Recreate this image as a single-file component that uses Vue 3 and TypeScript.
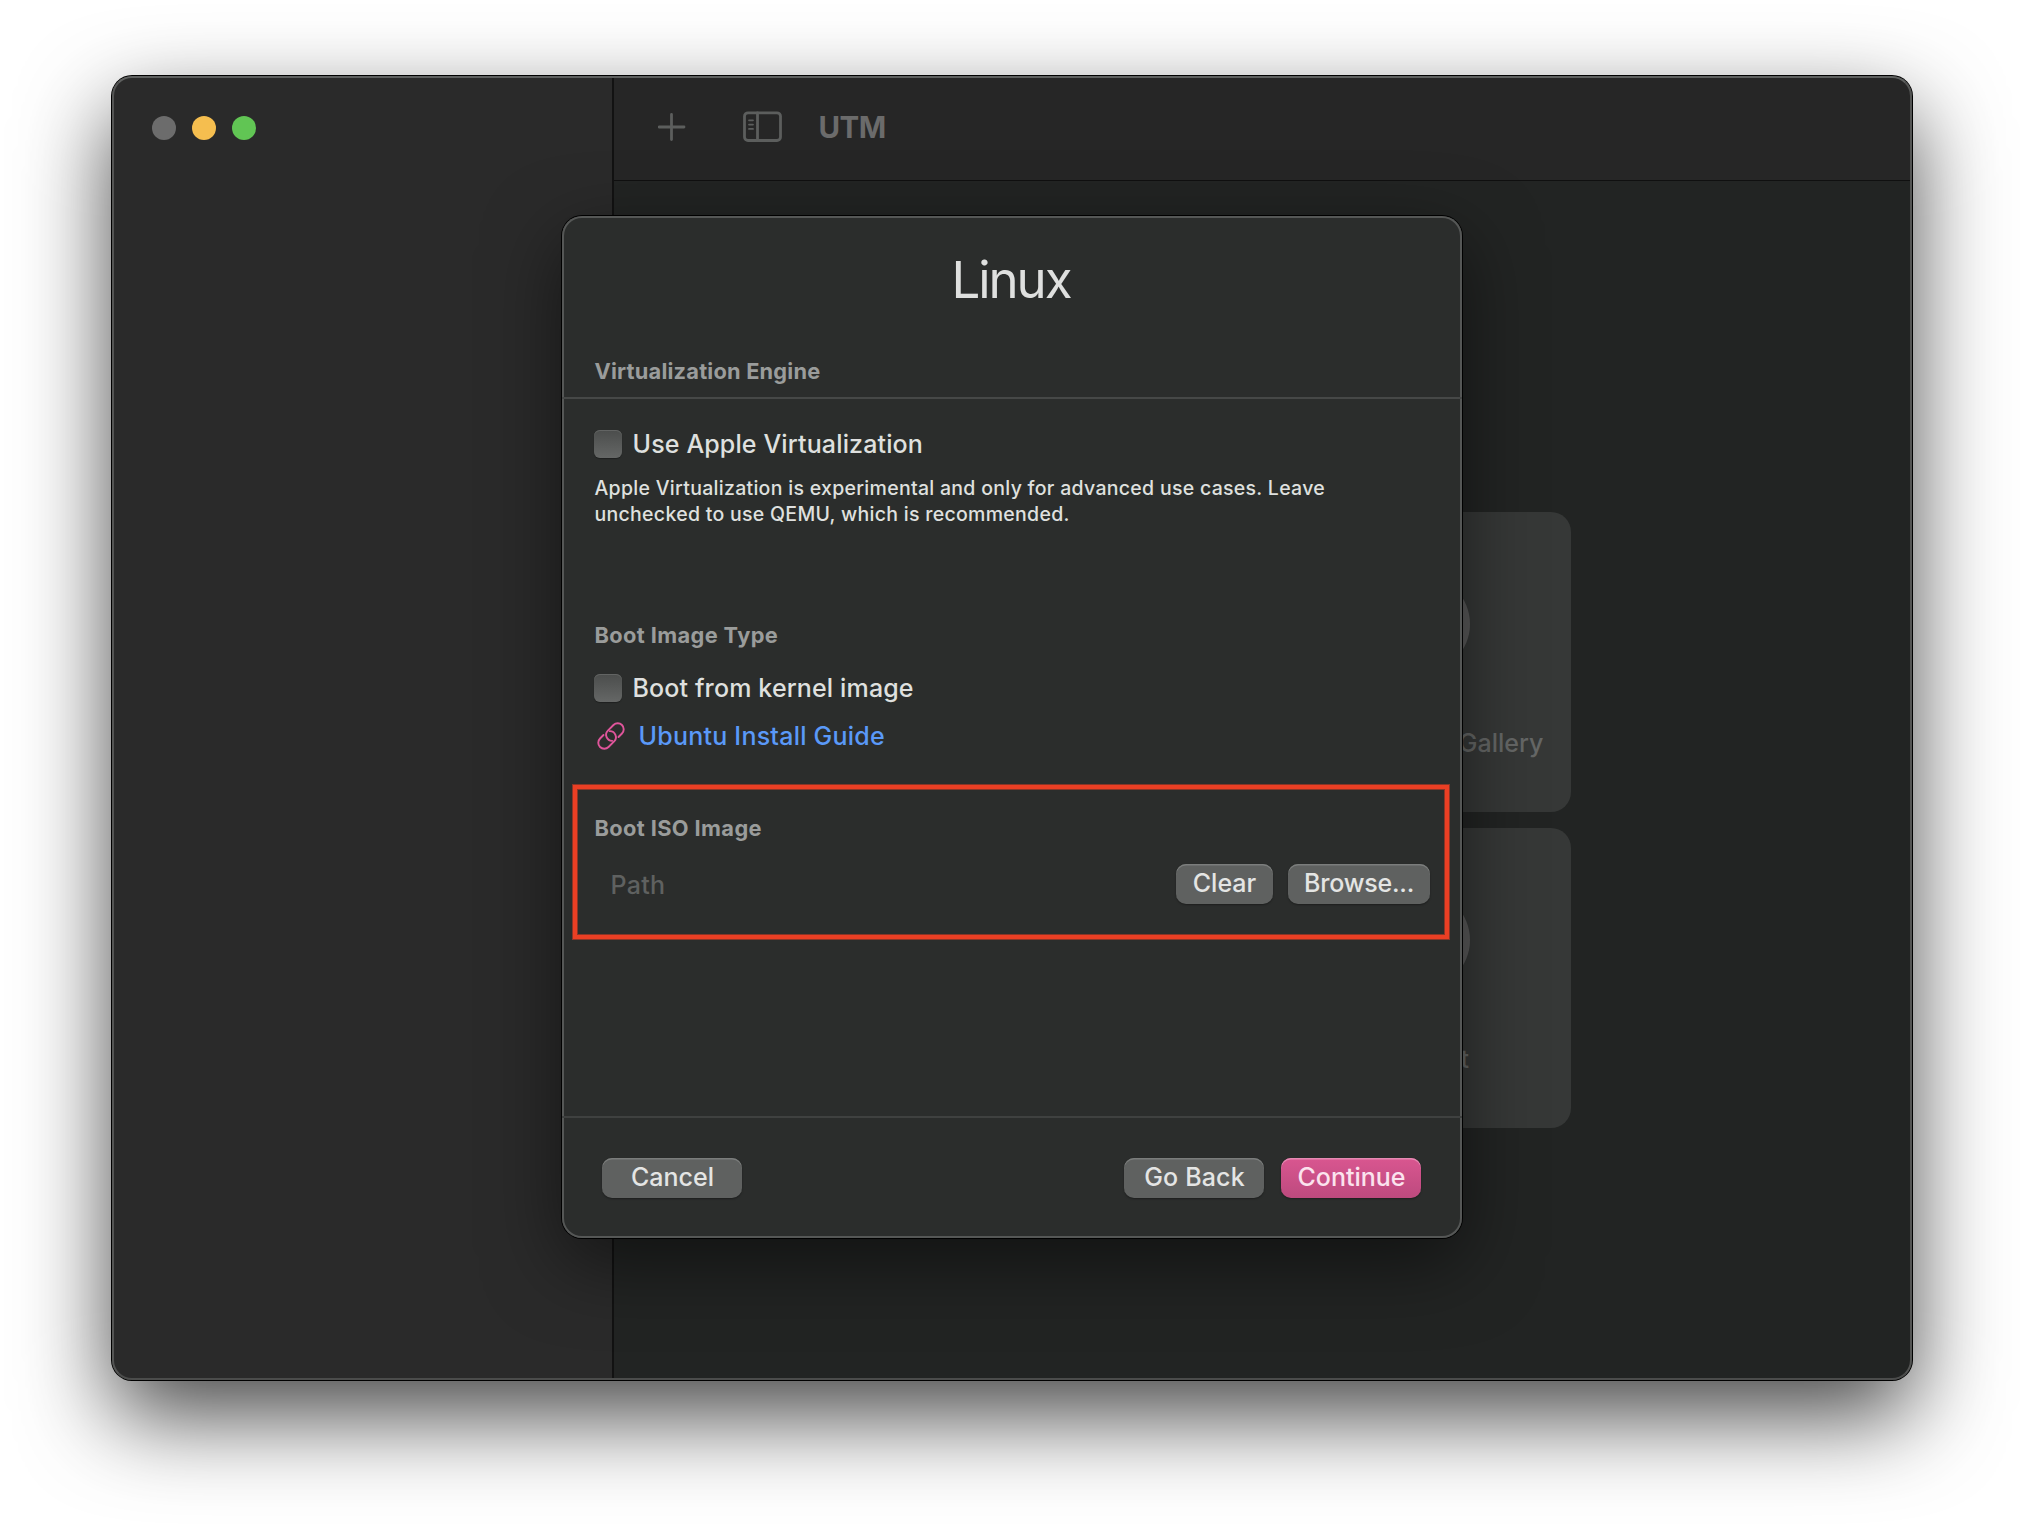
<script setup lang="ts">
const cards: string[] = ['', 'Browse UTM Gallery', '', 'Support']
</script>

<template>
  <div class="desktop">
    <div class="window">
      <aside class="sidebar">
        <div class="lights"><i class="light close"></i><i class="light min"></i><i class="light max"></i></div>
      </aside>
      <main class="main">
        <header class="toolbar">
          <svg class="plus" width="28" height="28" viewBox="0 0 28 28"><path d="M13.5 1.5v25M1 14h25" /></svg>
          <svg class="panel" width="40" height="32" viewBox="0 0 40 32">
            <rect x="1.5" y="1.8" width="36" height="27.7" rx="3.5" />
            <path d="M14.5 1.8v27.7" />
            <path class="thin" d="M6 9.3h4M6 13.6h4M6 17.9h4" />
          </svg>
          <span class="app-name">UTM</span>
        </header>
        <section class="gallery">
          <div v-for="(label, i) in cards" :key="i" class="card">
            <i class="disc"></i>
            <span class="card-label">{{ label }}</span>
          </div>
        </section>
      </main>
      <div class="edge"></div>

      <div class="sheet">
        <h1 class="title">Linux</h1>
        <h2 class="heading first">Virtualization Engine</h2>
        <hr class="rule" />
        <label class="check one"><i class="box"></i>Use Apple Virtualization</label>
        <p class="note">Apple Virtualization is experimental and only for advanced use cases. Leave<br />unchecked to use QEMU, which is recommended.</p>
        <h2 class="heading second">Boot Image Type</h2>
        <label class="check two"><i class="box"></i>Boot from kernel image</label>
        <a class="link">
          <svg width="28" height="28" viewBox="-14 -14 28 28">
            <g transform="rotate(-45)">
              <path d="M4.6 6H9.5A6 6 0 0 0 9.5 -6H1.6A6 6 0 0 0 -2.6 4.3" />
              <path d="M-4.6 -6H-9.5A6 6 0 0 0 -9.5 6H-1.6A6 6 0 0 0 2.6 -4.3" />
            </g>
          </svg>
          <span>Ubuntu Install Guide</span>
        </a>
        <h2 class="heading third">Boot ISO Image</h2>
        <div class="path-row">
          <span class="placeholder">Path</span>
          <button class="btn clear">Clear</button>
          <button class="btn browse">Browse...</button>
        </div>
        <footer class="footer">
          <button class="btn wide">Cancel</button>
          <button class="btn wide back">Go Back</button>
          <button class="btn wide primary">Continue</button>
        </footer>
        <div class="marker"></div>
      </div>
    </div>
  </div>
</template>

<style>
body { margin: 0; background: #fff; }
</style>

<style scoped>
* { box-sizing: border-box; }
.desktop { width: 2024px; height: 1528px; padding: 76px 112px; overflow: hidden; background: #fff; font-family: Inter, "Liberation Sans", sans-serif; }
.window { position: relative; display: flex; width: 1800px; height: 1304px; border-radius: 20px; background: #222423; box-shadow: 0 0 0 1px #000, 0 36px 90px rgba(0, 0, 0, .72); }
.edge { position: absolute; inset: 0; border-radius: 20px; border: 2px solid #545554; border-top-color: #5e605f; border-bottom-color: #4b4c4b; pointer-events: none; }
.sidebar { width: 502px; border-right: 2px solid #121212; background: #2a2a2a; border-radius: 20px 0 0 20px; padding: 40px; }
.lights { display: flex; gap: 16px; }
.light { width: 24px; height: 24px; border-radius: 50%; }
.close { background: #6c6c6c; }
.min { background: #f5be4f; }
.max { background: #61c554; }
.main { flex: 1; display: flex; flex-direction: column; }
.toolbar { display: flex; align-items: center; height: 105px; padding: 0 0 3px 44px; background: #262626; border-bottom: 1px solid #101010; border-radius: 0 20px 0 0; }
svg { fill: none; stroke: #5c5e5d; stroke-width: 2.8; stroke-linecap: round; flex: none; }
.app-name { font-size: 29.5px; font-weight: 650; letter-spacing: -.5px; color: #6b6b6b; margin-left: 35.5px; }
.panel { margin-left: 57px; }
.thin { stroke-width: 1.8; }
.gallery { display: grid; grid-template-columns: 300px 300px; grid-auto-rows: 300px; gap: 16px; margin: 331px 0 0 341px; }
.card { display: flex; flex-direction: column; align-items: center; border-radius: 20px; background: #363837; padding-top: 63px; }
.disc { width: 98px; height: 98px; border-radius: 50%; background: #5a5a5a; }
.card-label { font-size: 25px; line-height: 30px; margin-top: 55px; color: #656766; font-weight: 450; white-space: nowrap; }
.sheet { position: absolute; left: 450px; top: 140px; width: 900px; height: 1022px; display: flex; flex-direction: column; border-radius: 20px; background: #2b2d2c; color: #dfe0df; font-size: 25px; font-weight: 450; letter-spacing: .14px; box-shadow: inset 0 0 0 2px #555756, 0 0 0 1px #000, 0 24px 76px rgba(0, 0, 0, .5); }
h1, h2, p { margin: 0; }
.title { margin-top: 34px; padding-right: 2px; text-align: center; font-size: 51px; line-height: 60px; font-weight: 430; letter-spacing: -2.1px; }
.heading { margin-left: 32.5px; font-size: 21.8px; line-height: 26px; font-weight: 700; letter-spacing: .38px; color: #9a9c9b; }
.first { margin-top: 48px; letter-spacing: .2px; }
.rule { width: 900px; height: 2px; margin: 13px 0 0; border: 0; background: #464847; }
.check { display: flex; align-items: center; height: 28px; margin-left: 32px; gap: 10.5px; }
.one { margin-top: 31px; }
.box { width: 28px; height: 28px; border-radius: 6px; background: linear-gradient(#4b4d4c, #656766); box-shadow: inset 0 1px 0 #626463, 0 1px 1px rgba(0, 0, 0, .3); }
.note { margin: 17px 0 0 32.5px; font-size: 19.5px; line-height: 26px; white-space: nowrap; font-weight: 500; letter-spacing: .29px; }
.second { margin-top: 95px; }
.two { margin-top: 26px; }
.link { display: flex; align-items: center; gap: 13.5px; height: 28px; margin: 20px 0 0 35px; color: #5a99f8; letter-spacing: .23px; }
.link svg { stroke: #e0559b; stroke-width: 1.9; overflow: visible; }
.third { margin-top: 65px; }
.path-row { display: flex; align-items: center; height: 40px; margin: 23px 32px 0 48px; }
.placeholder { color: #5f6160; margin: 2px auto 0 .5px; letter-spacing: .3px; }
.btn { display: flex; align-items: center; justify-content: center; height: 40px; padding: 0 0 3px; border: 0; border-radius: 10px; background: #5f6160; color: #e4e5e4; font: 450 25px Inter, "Liberation Sans", sans-serif; box-shadow: inset 0 1.5px 0 #7b7d7c, 0 1px 2px rgba(0, 0, 0, .35); }
.clear { width: 97px; margin-right: 15px; }
.browse { width: 142px; letter-spacing: -.2px; }
.footer { display: flex; height: 122px; margin-top: auto; padding: 40px 41px 0 40px; border-top: 2px solid #3f4140; }
.wide { width: 140px; padding-left: 1px; }
.back { margin: 0 17px 0 auto; letter-spacing: .15px; }
.primary { background: linear-gradient(#d95690, #bd4a7e); color: #fbe3ee; box-shadow: inset 0 1.5px 0 #e58ab3, 0 1px 2px rgba(0, 0, 0, .35); }
.marker { position: absolute; left: 11px; top: 569px; width: 876px; height: 154px; border: 4px solid #ea3f24; box-shadow: 0 0 0 1px #8a3527, inset 0 0 0 1px #8a3527; }
</style>
